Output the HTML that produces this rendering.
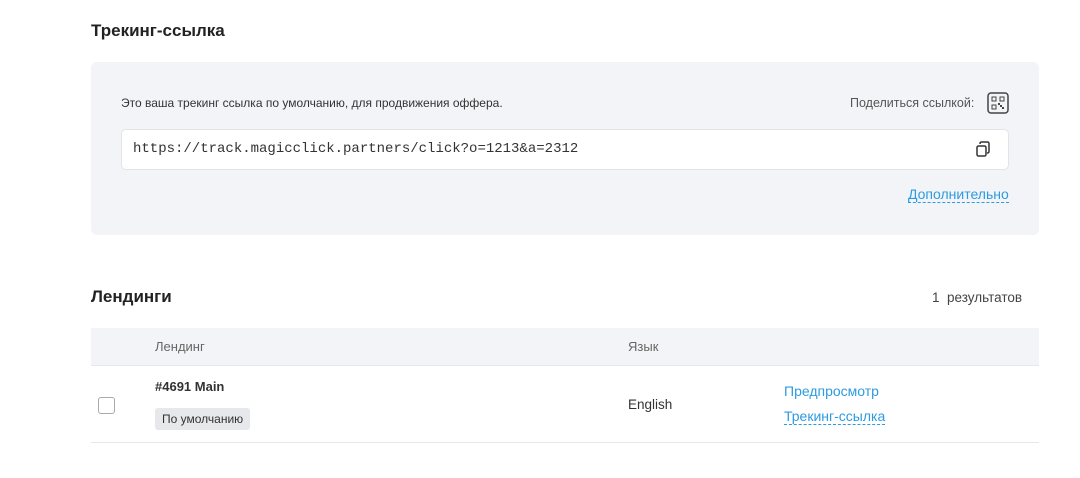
<!DOCTYPE html>
<html><head><meta charset="utf-8"><style>
body{margin:0;width:1080px;height:478px;background:#fff;font-family:"Liberation Sans","DejaVu Sans",sans-serif;color:#222;position:relative;overflow:hidden}
.a{position:absolute}
h2{margin:0;font-size:17px;font-weight:bold;color:#222}
.link{color:#2d9be0;font-size:14px;border-bottom:1px dashed #2d9be0}
</style></head><body>
<h2 class="a" style="left:91px;top:21px">Трекинг-ссылка</h2>
<div class="a" style="left:91px;top:62px;width:948px;height:173px;background:#f3f4f7;border-radius:6px"></div>
<div class="a" style="left:121px;top:96px;font-size:12px;color:#333">Это ваша трекинг ссылка по умолчанию, для продвижения оффера.</div>
<div class="a" style="left:850px;top:96px;font-size:12.5px;color:#555">Поделиться ссылкой:</div>
<svg class="a" style="left:987px;top:92px" width="22" height="22" viewBox="0 0 22 22"><rect x="1" y="1" width="20" height="20" rx="3" fill="none" stroke="#444" stroke-width="1.5"/><rect x="5" y="5" width="4" height="4" fill="none" stroke="#444"/><rect x="13" y="5" width="4" height="4" fill="none" stroke="#444"/><rect x="5" y="13" width="4" height="4" fill="none" stroke="#444"/><rect x="13" y="13" width="2" height="2" fill="#444"/><rect x="15" y="15" width="2" height="2" fill="#444"/><rect x="11" y="11" width="2" height="2" fill="#444"/></svg>
<div class="a" style="left:121px;top:129px;width:886px;height:39px;background:#fff;border:1px solid #e2e4e8;border-radius:5px"></div>
<div class="a" style="left:133px;top:141px;font-family:'Liberation Mono',monospace;font-size:14px;color:#333">https://track.magicclick.partners/click?o=1213&amp;a=2312</div>
<svg class="a" style="left:975px;top:141px" width="16" height="17" viewBox="0 0 16 17"><rect x="2" y="5" width="9" height="10" rx="1.5" fill="none" stroke="#333" stroke-width="1.5"/><path d="M5 3V2.5A1.5 1.5 0 0 1 6.5 1H12.5A1.5 1.5 0 0 1 14 2.5V10.5A1.5 1.5 0 0 1 12.5 12H12" fill="none" stroke="#333" stroke-width="1.5"/></svg>
<div class="a link" style="left:908px;top:186px">Дополнительно</div>
<h2 class="a" style="left:91px;top:287px">Лендинги</h2>
<div class="a" style="left:932px;top:290px;font-size:13.5px;color:#444">1&nbsp; результатов</div>
<div class="a" style="left:91px;top:328px;width:948px;height:37px;background:#f3f4f7;border-bottom:1px solid #e6e7ea"></div>
<div class="a" style="left:155px;top:339px;font-size:13px;color:#666">Лендинг</div>
<div class="a" style="left:628px;top:339px;font-size:13px;color:#666">Язык</div>
<div class="a" style="left:91px;top:442px;width:948px;height:1px;background:#e6e7ea"></div>
<div class="a" style="left:98px;top:397px;width:15px;height:15px;border:1px solid #aaa;border-radius:3px"></div>
<div class="a" style="left:155px;top:379px;font-size:13px;font-weight:bold;color:#333">#4691 Main</div>
<div class="a" style="left:155px;top:408px;padding:0 7px;height:22px;line-height:22px;background:#e6e8eb;border-radius:3px;font-size:12px;color:#333">По умолчанию</div>
<div class="a" style="left:628px;top:397px;font-size:13.5px;color:#333">English</div>
<div class="a" style="left:784px;top:383px;font-size:14px;color:#2d9be0">Предпросмотр</div>
<div class="a link" style="left:784px;top:408px">Трекинг-ссылка</div>
</body></html>
